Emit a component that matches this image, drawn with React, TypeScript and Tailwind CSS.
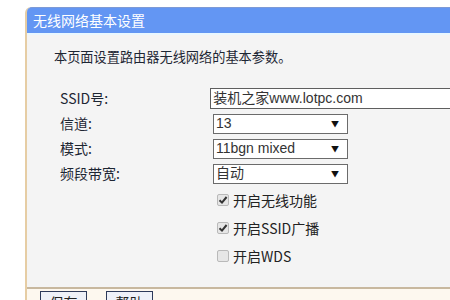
import React from "react";

const font = { fontFamily: '"SimSun","Noto Sans CJK SC","Liberation Sans",sans-serif' };

function Select({ value }: { value: string }) {
  return (
    <div className="flex h-[20px] w-[135px] items-center justify-between border border-[#6b6b6b] bg-white pl-[2px] pr-[8px] text-[14px] text-[#333]">
      <span style={{ fontFamily: '"Liberation Sans","Noto Sans CJK SC",sans-serif' }}>{value}</span>
      <span className="text-[8px] text-[#111]">▼</span>
    </div>
  );
}

function Check({ checked, label }: { checked: boolean; label: string }) {
  return (
    <div className="flex h-[28px] items-center pl-[190px]">
      <div className="flex h-[12px] w-[12px] items-center justify-center rounded-[2px] border border-[#b9b9b9] bg-[#e6e6e6]">
        {checked && (
          <svg width="10" height="10" viewBox="0 0 10 10">
            <path d="M1.5 5.2 L4 7.6 L8.6 2" stroke="#333" strokeWidth="2" fill="none" />
          </svg>
        )}
      </div>
      <span className="ml-[4px] text-[14px] text-[#222]">{label}</span>
    </div>
  );
}

function Row({ label, children }: { label: string; children: React.ReactNode }) {
  return (
    <div className="flex h-[25px] items-center">
      <div className="w-[186px] pl-[33px] text-[14px] text-[#1d2633]">{label}</div>
      {children}
    </div>
  );
}

export default function App() {
  return (
    <div className="h-[300px] w-[450px] overflow-hidden bg-white pl-[25px] pt-[7px]" style={font}>
      <div className="w-[480px] border-l-2 border-[#e6cda4] rounded-tl-[6px]">
        <div className="h-[26px] rounded-tl-[5px] border-t border-[#7d9ad6] bg-[#6396f3] pl-[6px] text-[14px] leading-[25px] text-white">
          无线网络基本设置
        </div>
        <div className="h-[2px] bg-[#e9f7ff]" />
        <div className="h-[252px] bg-[#f4f4f4]">
          <div className="pl-[27px] pt-[12px] text-[13.2px] leading-[20px] text-[#1d2633]">
            本页面设置路由器无线网络的基本参数。
          </div>
          <div className="mt-[19px]">
            <Row label="SSID号:">
              <div
                className="flex h-[21px] w-[300px] items-center border border-[#5e5e5e] bg-white pl-[2px] text-[14px] text-[#333]"
                style={{ fontFamily: '"Liberation Sans","Noto Sans CJK SC",sans-serif' }}
              >
                装机之家www.lotpc.com
              </div>
            </Row>
            <Row label="信道:">
              <Select value="13" />
            </Row>
            <Row label="模式:">
              <Select value="11bgn mixed" />
            </Row>
            <Row label="频段带宽:">
              <Select value="自动" />
            </Row>
          </div>
          <Check checked label="开启无线功能" />
          <Check checked label="开启SSID广播" />
          <Check checked={false} label="开启WDS" />
        </div>
        <div className="h-[2px] bg-[#c8b89f]" />
        <div className="flex h-[20px] gap-[19px] bg-[#fdf8ef] pl-[13px] pt-[2px]">
          <div className="h-[22px] w-[47px] border border-[#2d3a5a] bg-[#eef1f8] text-center text-[14px] leading-[20px] text-[#222]">
            保存
          </div>
          <div className="h-[22px] w-[47px] border border-[#2d3a5a] bg-[#eef1f8] text-center text-[14px] leading-[20px] text-[#222]">
            帮助
          </div>
        </div>
      </div>
    </div>
  );
}
